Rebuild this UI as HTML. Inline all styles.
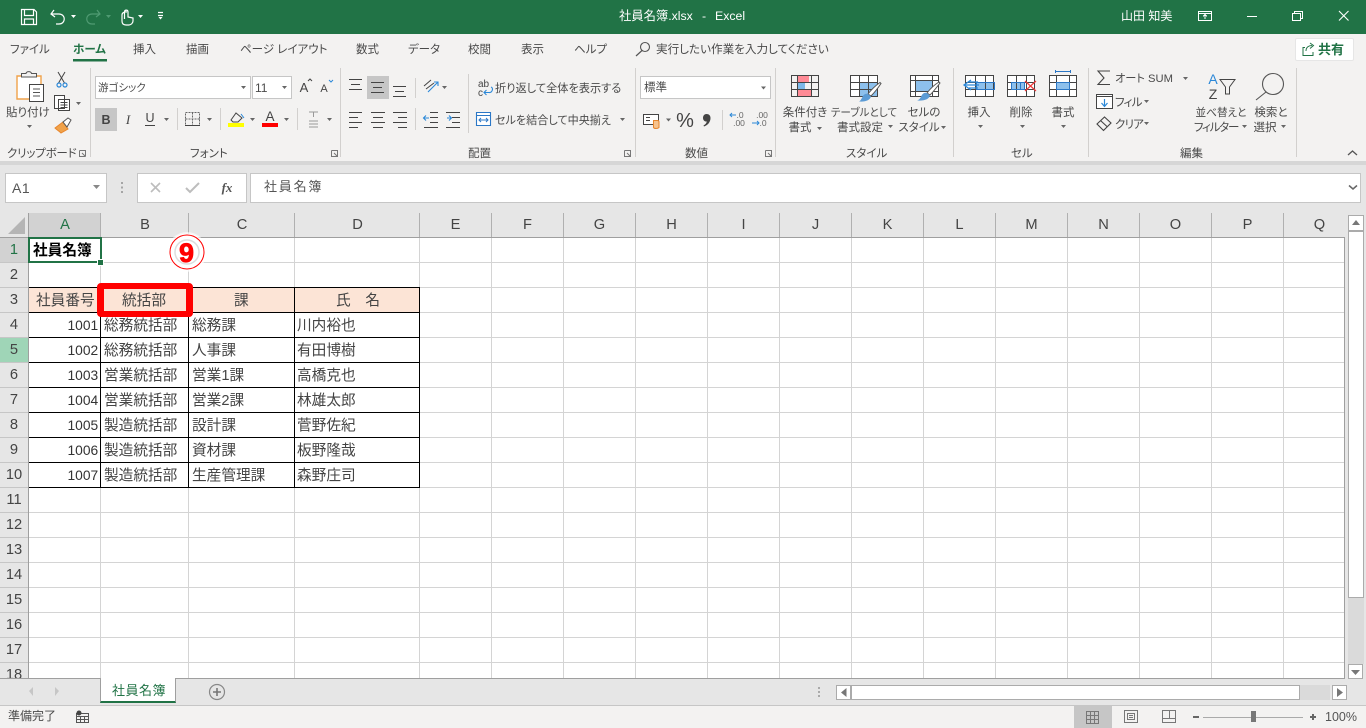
<!DOCTYPE html>
<html lang="ja"><head><meta charset="utf-8"><title>社員名簿.xlsx - Excel</title>
<style>
*{box-sizing:border-box}
html,body{margin:0;padding:0;width:1366px;height:728px;overflow:hidden;background:#fff}
body{position:relative;font-family:"Liberation Sans","Noto Sans CJK JP",sans-serif;color:#444}
div{position:absolute}
.t{white-space:nowrap;font-size:11.5px;line-height:16px;height:16px;color:#4a4a4a;font-feature-settings:"palt"}
.m{text-align:center;transform:translateX(-50%)}
.g{white-space:nowrap;font-size:14.67px;line-height:25px;height:25px;color:#444;font-family:"Liberation Sans","Noto Sans CJK JP",sans-serif;margin-top:2px}
.n{white-space:nowrap;font-size:13.8px;line-height:25px;height:25px;color:#333;left:67.5px;margin-top:0}
.h{white-space:nowrap;font-size:14.67px;line-height:24px;height:24px;text-align:center;color:#444}
.r{white-space:nowrap;font-size:14.67px;line-height:25px;height:25px;left:0;width:28px;text-align:center;color:#444}
.b{background:#fff;border:1px solid #c6c6c6}
svg{position:absolute;left:0;top:0}
</style></head><body>
<!-- backgrounds -->
<div style="left:0;top:0;width:1366px;height:34px;background:#217346"></div>
<div style="left:0;top:34px;width:1366px;height:127px;background:#f3f2f1"></div>
<div style="left:0;top:161px;width:1366px;height:52px;background:#e6e6e6"></div>
<div style="left:0;top:161px;width:1366px;height:4px;background:#d6d6d6"></div>
<div style="left:0;top:213px;width:1345px;height:24px;background:#e6e6e6"></div>
<div style="left:0;top:237px;width:28px;height:441px;background:#e6e6e6"></div>
<div style="left:1345px;top:213px;width:21px;height:465px;background:#e6e6e6"></div>
<div style="left:0;top:678px;width:1366px;height:28px;background:#e6e6e6"></div>
<div style="left:0;top:706px;width:1366px;height:22px;background:#f3f2f1"></div>
<div style="left:29px;top:213px;width:71px;height:24px;background:#d2d2d2"></div>
<div style="left:0;top:238px;width:28px;height:24px;background:#d2d2d2"></div>
<div style="left:0;top:338px;width:28px;height:24px;background:#9fd5b7"></div>
<div style="left:29px;top:288px;width:390px;height:24px;background:#fce4d6"></div>
<!-- boxes -->
<div class="b" style="left:95px;top:76px;width:156px;height:23px"></div>
<div class="b" style="left:252px;top:76px;width:40px;height:23px"></div>
<div class="b" style="left:640px;top:76px;width:131px;height:23px"></div>
<div class="b" style="left:5px;top:173px;width:102px;height:30px"></div>
<div class="b" style="left:137px;top:173px;width:110px;height:30px"></div>
<div class="b" style="left:250px;top:173px;width:1111px;height:30px"></div>
<div style="left:1295px;top:38px;width:59px;height:23px;background:#fff;border:1px solid #e6e6e6;border-radius:2px"></div>
<div style="left:367px;top:76px;width:22px;height:23px;background:#c6c6c6"></div>
<div style="left:95px;top:108px;width:22px;height:23px;background:#c6c6c6"></div>
<div style="left:1074px;top:706px;width:38px;height:22px;background:#c6c6c6"></div>
<!-- scrollbars -->
<div style="left:1348px;top:231px;width:16px;height:367px;background:#fff;border:1px solid #ababab"></div>
<div style="left:1348px;top:598px;width:16px;height:66px;background:#dadada"></div>
<div style="left:1348px;top:215px;width:16px;height:16px;background:#fff;border:1px solid #ababab"></div>
<div style="left:1348px;top:664px;width:15px;height:15px;background:#fff;border:1px solid #ababab"></div>
<div style="left:851px;top:685px;width:449px;height:15px;background:#fff;border:1px solid #ababab"></div>
<div style="left:1300px;top:685px;width:30px;height:15px;background:#dadada"></div>
<div style="left:836px;top:685px;width:15px;height:15px;background:#fff;border:1px solid #ababab"></div>
<div style="left:1332px;top:685px;width:15px;height:15px;background:#fff;border:1px solid #ababab"></div>
<!-- sheet tab -->
<div style="left:100px;top:678px;width:76px;height:25px;background:#fff;border-left:1px solid #9f9f9f;border-right:1px solid #9f9f9f;border-bottom:2px solid #217346"></div>

<svg width="1366" height="728" viewBox="0 0 1366 728" fill="none">
<g shape-rendering="crispEdges">
<!-- light grid -->
<path stroke="#d4d4d4" d="M100.5 237V678M188.5 237V678M294.5 237V678M419.5 237V678M491.5 237V678M563.5 237V678M635.5 237V678M707.5 237V678M779.5 237V678M851.5 237V678M923.5 237V678M995.5 237V678M1067.5 237V678M1139.5 237V678M1211.5 237V678M1283.5 237V678M29 262.5H1345M29 287.5H1345M29 312.5H1345M29 337.5H1345M29 362.5H1345M29 387.5H1345M29 412.5H1345M29 437.5H1345M29 462.5H1345M29 487.5H1345M29 512.5H1345M29 537.5H1345M29 562.5H1345M29 587.5H1345M29 612.5H1345M29 637.5H1345M29 662.5H1345"/>
<!-- header separators -->
<path stroke="#b0b0b0" d="M100.5 213V237M188.5 213V237M294.5 213V237M419.5 213V237M491.5 213V237M563.5 213V237M635.5 213V237M707.5 213V237M779.5 213V237M851.5 213V237M923.5 213V237M995.5 213V237M1067.5 213V237M1139.5 213V237M1211.5 213V237M1283.5 213V237"/>
<path stroke="#c6c6c6" d="M0 262.5H28M0 287.5H28M0 312.5H28M0 337.5H28M0 362.5H28M0 387.5H28M0 412.5H28M0 437.5H28M0 462.5H28M0 487.5H28M0 512.5H28M0 537.5H28M0 562.5H28M0 587.5H28M0 612.5H28M0 637.5H28M0 662.5H28"/>
<path stroke="#9f9f9f" d="M28.5 213V678M0 237.5H1345M1344.5 237V678M0 678.5H100M176 678.5H1345"/>
<path stroke="#c6c6c6" d="M0 705.5H1366"/>
<!-- black table -->
<path stroke="#000" d="M29 287.5H420M29 312.5H420M29 337.5H420M29 362.5H420M29 387.5H420M29 412.5H420M29 437.5H420M29 462.5H420M29 487.5H420M100.5 287V488M188.5 287V488M294.5 287V488M419.5 287V488"/>
<!-- ribbon separators -->
<path stroke="#d2d0ce" d="M90.5 68V157M340.5 68V157M635.5 68V157M775.5 68V157M953.5 68V157M1088.5 68V157M1296.5 68V157M468.5 74V133M177.5 108V130M220.5 108V130M297.5 108V130M415.5 78V98M415.5 108V130M722.5 110V130"/>
<!-- selected cell -->
<path stroke="#217346" stroke-width="2" d="M29 238H101V262H29Z"/>
<path fill="#217346" stroke="#fff" d="M97.5 259.5H103.5V265.5H97.5Z"/>
</g>
<!-- corner triangle -->
<path fill="#b5b5b5" d="M25 217V234H8Z"/>
<!-- QAT -->
<g stroke="#fff" stroke-width="1.2">
<path d="M21.5 9.5H34L36.5 12V24.5H21.5ZM24.5 9.5V15.5H33.5V9.5M24.5 24.5V19H33.5V24.5"/>
<path d="M54 10L51 14L55 17M51.5 14H59C66 14 66 24 59 24H56"/>
<path d="M127 12C124 11.500 122 13 122 15V21C122 24 124 25 126 25H129C131 25 133 23 133 21V18L128 17V12C128 9.500 124.500 9.500 124.500 12V19M119 19"/>
<path stroke="#4f9a72" d="M97 10L100 14L96 17M99.500 14H92C85 14 85 24 92 24H95"/>
<path d="M158 12.500H163M158 15.500H163"/>
</g>
<path fill="#fff" d="M71 15H76L73.500 18ZM138 15H143L140.500 18ZM158.500 17H162.500L160.500 19.500Z"/>
<path fill="#4f9a72" d="M106 15H111L108.500 18Z"/>
<!-- window -->
<g stroke="#fff" stroke-width="1.1" shape-rendering="crispEdges">
<path d="M1198.500 11.500H1211.500V20.500H1198.500ZM1198.500 13.500H1211.500M1205 19V15M1203 16.500L1205 14.500L1207 16.500"/>
<path d="M1247 16.500H1257M1292.500 13.500H1300.500V20.500H1292.500ZM1294.500 13.500V11.500H1302.500V18.500H1300.500"/>
</g>
<path stroke="#fff" stroke-width="1.1" d="M1339 11L1348.500 20.500M1348.500 11L1339 20.500"/>
<!-- tab underline & search -->
<path fill="#217346" d="M73 59H107V61.500H73Z"/>
<circle cx="645" cy="47" r="4.500" stroke="#555" stroke-width="1.100"/>
<path stroke="#555" stroke-width="1.200" d="M642 50.500L636 56"/>
<!-- share -->
<path stroke="#217346" stroke-width="1" d="M1305 47.500H1303V55.500H1313V52M1306 51C1306 47 1309 45.500 1312 45.500M1310 43L1313.500 45.500L1310 48.500"/>
<!-- paste -->
<path fill="#fff" stroke="#f0a24a" stroke-width="1.400" d="M17 76H41V99H17Z"/>
<path fill="#f3f2f1" stroke="#555" d="M21.500 77V73.500H26C26.500 71 31 71 31.500 73.500H36.500V77Z"/>
<path fill="#fff" stroke="#444" d="M29.500 84.500H43.500V101.500H29.500Z"/>
<path stroke="#555" d="M33 89H40M33 92.500H40M33 96H40"/>
<!-- cut copy brush -->
<path stroke="#444" d="M58 72L64.500 83M65 72L58.500 83"/>
<circle cx="59" cy="85" r="2" stroke="#2b88d8" stroke-width="1.200"/><circle cx="65" cy="85" r="2" stroke="#2b88d8" stroke-width="1.200"/>
<path fill="#fff" stroke="#444" d="M54.500 95.500H64.500V108.500H54.500ZM58.500 99.500H69.500V110.500H58.500Z"/>
<path stroke="#444" d="M60.500 102.500H67.500M60.500 105H67.500M60.500 107.500H67.500"/>
<path fill="#f0a24a" stroke="#e8862c" d="M55 128L63 122L68 129L61 133C59 131 57 130 55 128Z"/>
<path fill="#fff" stroke="#555" d="M63 122L68 118L71 120L67 127Z"/>
<!-- small dropdown arrows -->
<g fill="#666">
<path d="M76 102H81L78.500 105ZM27 125H32L29.500 128ZM241 86H246L243.500 89ZM282 86H287L284.500 89ZM164 118H169L166.500 121ZM207 118H212L209.500 121ZM250 118H255L252.500 121ZM284 118H289L286.500 121ZM327 118H332L329.500 121ZM442 86H447L444.500 89ZM620 118H625L622.500 121ZM761 86.500H766L763.500 89.500ZM666 118.500H671L668.500 121.500ZM817 127H822L819.500 130ZM888 125H893L890.500 128ZM941 126H946L943.500 129ZM978 125H983L980.500 128ZM1020 125H1025L1022.500 128ZM1061 125H1066L1063.500 128ZM1183 77H1188L1185.500 80ZM1144 100H1149L1146.500 103ZM1144 122H1149L1146.500 125ZM1242 125H1247L1244.500 128ZM1281 125H1286L1283.500 128Z"/>
<path fill="#888" d="M93 185H100L96.500 189Z"/>
</g>
<!-- font group -->
<text x="106" y="124" font-family="Liberation Sans" font-weight="700" font-size="12.500" fill="#444" text-anchor="middle">B</text>
<text x="128" y="124" font-family="Liberation Serif" font-style="italic" font-size="13" fill="#444" text-anchor="middle">I</text>
<text x="150" y="122" font-family="Liberation Sans" font-size="12.500" fill="#444" text-anchor="middle">U</text>
<path stroke="#444" d="M145 125.500H155"/>
<path stroke="#666" stroke-dasharray="2 1" d="M185.500 112.500H199.500V125.500H185.500ZM192.500 112.500V125.500M185.500 119H199.500"/>
<path stroke="#444" d="M185 125.500H200"/>
<text x="304" y="92" font-family="Liberation Sans" font-size="13" fill="#444" text-anchor="middle">A</text>
<path stroke="#444" d="M308 81L310 79L312 81"/>
<text x="324" y="92" font-family="Liberation Sans" font-size="11" fill="#444" text-anchor="middle">A</text>
<path stroke="#2b88d8" d="M329 80L331 82L333 80"/>
<path stroke="#444" d="M231 120L236 113L242 118L238 122H233Z"/>
<path stroke="#2b88d8" d="M241 114L244 118"/>
<path fill="#ffff00" d="M228 123H244V127H228Z"/>
<path fill="#f00" d="M262 123H278V127H262Z"/>
<text x="270" y="121" font-family="Liberation Sans" font-size="13.500" fill="#444" text-anchor="middle">A</text>
<path stroke="#999" d="M309 112H318M313.500 112V117M309 121H318M309 124H318M309 127H318"/>
<!-- alignment -->
<g stroke="#444" shape-rendering="crispEdges">
<path d="M349 79.500H362M351 84.500H360M349 89.500H362"/>
<path d="M371 82.500H384M373 87.500H382M371 92.500H384"/>
<path d="M393 86.500H406M395 91.500H404M393 96.500H406"/>
<path d="M349 112.500H362M349 117.500H358M349 122.500H362M349 127.500H358"/>
<path d="M371 112.500H385M373 117.500H383M371 122.500H385M373 127.500H383"/>
<path d="M393 112.500H407M398 117.500H407M393 122.500H407M398 127.500H407"/>
<path d="M430 112.500H438M430 117.500H438M430 122.500H438M424 127.500H438"/>
<path d="M446 112.500H460M452 117.500H460M452 122.500H460M446 127.500H460"/>
</g>
<path stroke="#2b88d8" stroke-width="1.100" d="M429 118H424M426 115.500L423.500 118L426 120.500M447 118H451M449 115.500L451.500 118L449 120.500"/>
<path stroke="#2b88d8" stroke-width="1.100" d="M428 92L438 82M434 82H438V86"/>
<path stroke="#444" d="M424 86L431 80M426 89L434 83"/>
<!-- wrap & merge -->
<text x="478" y="87" font-family="Liberation Sans" font-size="10" fill="#444">ab</text>
<text x="478" y="96" font-family="Liberation Sans" font-size="10" fill="#444">c</text>
<path stroke="#2b88d8" stroke-width="1.100" d="M491 87C494 88 492 93 489 92.500H484M486.500 90L484 92.500L486.500 95"/>
<path fill="#fff" stroke="#2b77c6" stroke-width="1.100" d="M476.500 112.500H490.500V125.500H476.500Z"/>
<path stroke="#2b77c6" d="M476.500 115.500H490.500"/>
<path stroke="#2b77c6" d="M479 120H488M481 118L479 120L481 122M486 118L488 120L486 122"/>
<!-- number -->
<path fill="#fff" stroke="#444" d="M643.500 114.500H658.500V124.500H643.500Z"/>
<path stroke="#444" d="M646 117.500H650M646 120.500H650"/>
<path fill="#f6c38e" stroke="#e8862c" d="M653.500 120.500H657.500C659 120.500 659 122 659 122V127.500C659 127.500 658 128.500 656 128.500C654 128.500 653.500 127.500 653.500 127.500Z"/>
<text x="685" y="127" font-family="Liberation Sans" font-size="20" fill="#444" text-anchor="middle">%</text>
<path fill="#444" d="M706.500 114C709 114 710.500 115.500 710.500 118C710.500 122 708 125 704 126.500L703.500 125.500C705.500 124.500 706.500 123 706.800 121.500C704.500 121.800 703 120 703 118C703 115.500 704.500 114 706.500 114Z"/>
<text x="740" y="118" font-family="Liberation Sans" font-size="8.500" fill="#666" text-anchor="middle">.0</text>
<text x="739" y="126" font-family="Liberation Sans" font-size="8.500" fill="#666" text-anchor="middle">.00</text>
<text x="762" y="118" font-family="Liberation Sans" font-size="8.500" fill="#666" text-anchor="middle">.00</text>
<text x="763" y="126" font-family="Liberation Sans" font-size="8.500" fill="#666" text-anchor="middle">.0</text>
<path stroke="#2b88d8" d="M730 115H736M732 113L730 115L732 117M752 123H759M757 121L759 123L757 125"/>
<!-- cond format -->
<g shape-rendering="crispEdges">
<path fill="#ff8b96" d="M797 75H809V82H797ZM797 89H811V97H797Z"/>
<path fill="#7db8e8" d="M797 82H805V89H797Z"/>
<path stroke="#444" d="M791.500 75.500H818.500V96.500H791.500ZM791.500 82.500H818.500M791.500 89.500H818.500M811.500 75.500V96.500"/>
<path stroke="#444" d="M797.500 75.500V96.500"/>
<path fill="#fff" d="M851 75H877V96H851Z"/>
<path fill="#8dc0ec" d="M860 82H877V96H860Z"/>
<path stroke="#444" d="M850.500 75.500H877.500V96.500H850.500ZM850.500 82.500H877.500M850.500 89.500H877.500M859.500 75.500V96.500M868.500 75.500V96.500"/>
<path fill="#fff" d="M911 75H938V96H911Z"/>
<path fill="#8dc0ec" d="M915 80H932V92H915Z"/>
<path stroke="#444" d="M910.500 75.500H938.500V96.500H910.500ZM910.500 80.500H938.500M910.500 91.500H938.500M915.500 75.500V96.500M932.500 75.500V96.500"/>
<!-- cells -->
<path fill="#fff" d="M965 75H993V96H965Z"/>
<path fill="#8dc0ec" d="M976 83H994V90H976Z"/>
<path stroke="#444" d="M965.500 75.500H993.500V96.500H965.500ZM965.500 82.500H993.500M965.500 89.500H993.500M975.500 75.500V96.500M985.500 75.500V96.500"/>
<path stroke="#2b77c6" d="M976.500 82.500H994.500V89.500H976.500Z"/>
<path fill="#fff" d="M1007 75H1035V96H1007Z"/>
<path fill="#8dc0ec" d="M1011 83H1024V90H1011Z"/>
<path stroke="#444" d="M1007.500 75.500H1034.500V96.500H1007.500ZM1007.500 82.500H1034.500M1007.500 89.500H1034.500M1016.500 75.500V96.500M1026.500 75.500V96.500"/>
<path stroke="#2b77c6" d="M1011.500 82.500H1024.500V89.500H1011.500ZM1020.500 82.500V89.500"/>
<path fill="#fff" d="M1049 75H1077V96H1049Z"/>
<path fill="#8dc0ec" d="M1056 82H1070V89H1056Z"/>
<path stroke="#444" d="M1049.500 75.500H1076.500V96.500H1049.500ZM1049.500 82.500H1076.500M1049.500 89.500H1076.500M1056.500 75.500V96.500M1069.500 75.500V96.500"/>
<path stroke="#2b77c6" d="M1056.500 82.500H1069.500V89.500H1056.500ZM1055 71.500H1071M1055.500 70V73M1070.500 70V73"/>
</g>
<path fill="#fff" stroke="#555" d="M868 94C871 90 875 86 880 82.500L881 83.500C878 88 875 92 871 96Z"/>
<path fill="#5b9bd5" d="M862 98C863 95 865 93 868 94L871 96.500C870 100 866 102 859 101.500C861 100.500 861 99 862 98Z"/>
<path fill="#fff" stroke="#555" d="M927 93C930 89 934 85 939 82L940 83C937 87 934 91 930 95Z"/>
<path fill="#5b9bd5" d="M921 97C922 94 924 92 927 93L930 95.500C929 99 925 101 917 100.500C920 99.500 920 98 921 97Z"/>
<path stroke="#2b88d8" stroke-width="1.300" d="M979 85H965M971 80L964 85L971 90M978 82H969M978 88H969"/>
<path stroke="#f03a3a" stroke-width="1.200" d="M1025 81L1036 91M1036 81L1025 91"/>
<!-- editing -->
<path stroke="#444" stroke-width="1.100" d="M1110 71H1098L1104 78L1098 84.500H1110"/>
<path fill="#fff" stroke="#444" d="M1096.500 94.500H1112.500V108.500H1096.500Z"/>
<path stroke="#444" d="M1096 96.500H1113"/>
<path stroke="#2b88d8" stroke-width="1.200" d="M1104.500 99V106M1101.500 103L1104.500 106.500L1107.500 103"/>
<path stroke="#444" stroke-width="1.100" d="M1097 124L1104.500 117L1111 123L1103.500 130.500ZM1100.500 120.500L1107.500 127"/>
<text x="1213" y="84" font-family="Liberation Sans" font-size="14" fill="#2b88d8" text-anchor="middle">A</text>
<text x="1213" y="99" font-family="Liberation Sans" font-size="14" fill="#444" text-anchor="middle">Z</text>
<path stroke="#444" d="M1220 79.500H1235L1229.500 87V94H1225.500V87Z"/>
<circle cx="1273" cy="84" r="10.500" stroke="#555" stroke-width="1.100"/>
<path stroke="#555" stroke-width="1.100" d="M1266 92L1256 100"/>
<path stroke="#555" stroke-width="1.300" d="M1348 155L1352.500 151L1357 155"/>
<!-- launchers -->
<path stroke="#777" d="M79.500 150.500H85.500V156.500M79.500 150.500V156.500H85.500M82 153L85 156M331.500 150.500H337.500V156.500H331.500V150.500M334 153L337 156M624.500 150.500H630.500V156.500H624.500V150.500M627 153L630 156M765.500 150.500H771.500V156.500H765.500V150.500M768 153L771 156"/>
<!-- formula bar -->
<path stroke="#bdbdbd" stroke-width="1.600" d="M151 183L160 192M160 183L151 192"/>
<path stroke="#bdbdbd" stroke-width="2" d="M186 188L190 192L199 183"/>
<text x="227" y="192" font-family="Liberation Serif" font-style="italic" font-weight="700" font-size="13" fill="#555" text-anchor="middle">fx</text>
<path fill="#a5a5a5" d="M121 182H123V184H121ZM121 186.500H123V188.500H121ZM121 191H123V193H121Z"/>
<path stroke="#666" stroke-width="1.500" d="M1349 185.500L1353 189L1357 185.500"/>
<!-- scrollbar arrows -->
<path fill="#777" d="M1352 225L1356 220L1360 225ZM1351 670H1360L1355.500 675ZM841 692.500L846.500 688V697ZM1337 688L1343 692.500L1337 697Z"/>
<path fill="#c6c6c6" d="M29 691L33 687V696ZM55 687L59 691L55 696Z"/>
<path fill="#aaa" d="M818 687H820V689H818ZM818 691H820V693H818ZM818 695H820V697H818Z"/>
<circle cx="217" cy="692" r="7.500" stroke="#888" stroke-width="1.200"/>
<path stroke="#777" stroke-width="1.600" d="M213 692H221M217 688V696"/>
<!-- status -->
<g shape-rendering="crispEdges">
<path stroke="#555" d="M76.500 713.500H88.500V722.500H76.500ZM76.500 716.500H88.500M80.500 716.500V722.500M84.500 716.500V722.500M76.500 719.500H88.500"/>
<path stroke="#777" d="M1086.500 711.500H1098.500V723.500H1086.500ZM1090.500 711.500V723.500M1094.500 711.500V723.500M1086.500 715.500H1098.500M1086.500 719.500H1098.500"/>
<path stroke="#777" d="M1124.500 710.500H1137.500V722.500H1124.500ZM1127.500 713.500H1134.500V719.500H1127.500ZM1129 715.500H1133M1129 717.500H1133"/>
<path stroke="#777" d="M1162.500 710.500H1175.500V722.500H1162.500ZM1162.500 718.500H1175.500M1169.500 710.500V718.500"/>
<path stroke="#666" stroke-width="2" d="M1193 717H1199M1310 717H1316M1313 714V720"/>
<path stroke="#aaa" d="M1203 717.500H1303"/>
<path fill="#777" d="M1251 711H1256V722H1251Z"/>
</g>
<circle cx="79" cy="713" r="2.500" fill="#444"/>
<!-- circled 9 -->
<circle cx="187" cy="252" r="20" fill="#fff" fill-opacity=".6"/>
<circle cx="187" cy="252" r="18.500" fill="#fff"/>
<circle cx="187" cy="252" r="17" stroke="#f00" stroke-width="1"/>
<circle cx="187" cy="252" r="12" stroke="#ddd" stroke-width="1.500"/>
<text x="186.500" y="262" font-family="Liberation Sans" font-weight="700" font-size="27" fill="#f00" stroke="#f00" stroke-width=".8" text-anchor="middle">9</text>
</svg>

<!-- red highlight -->
<div style="left:97px;top:283px;width:96px;height:34px;border:7px solid #f00;border-top-width:6px;border-bottom-width:6px;border-radius:4px"></div>

<!-- title -->
<div class="t" style="left:619px;top:8px;font-size:12.3px;color:#fff">社員名簿.xlsx</div>
<div class="t" style="left:702px;top:8px;font-size:12.3px;color:#fff">-</div>
<div class="t" style="left:715px;top:8px;font-size:12.3px;color:#fff">Excel</div>
<div class="t" style="left:1121px;top:8px;font-size:12px;color:#fff">山田 知美</div>
<!-- tabs -->
<div class="t" style="left:10px;top:42px">ファイル</div>
<div class="t" style="left:73px;top:42px;font-weight:700;color:#217346">ホーム</div>
<div class="t" style="left:133px;top:42px">挿入</div>
<div class="t" style="left:186px;top:42px">描画</div>
<div class="t" style="left:240px;top:42px">ページ レイアウト</div>
<div class="t" style="left:356px;top:42px">数式</div>
<div class="t" style="left:408px;top:42px">データ</div>
<div class="t" style="left:468px;top:42px">校閲</div>
<div class="t" style="left:521px;top:42px">表示</div>
<div class="t" style="left:574px;top:42px">ヘルプ</div>
<div class="t" style="left:656px;top:42px;font-size:11.6px">実行したい作業を入力してください</div>
<div class="t" style="left:1318px;top:42px;font-size:13px;font-weight:700;color:#217346">共有</div>
<!-- ribbon text -->
<div class="t" style="left:6px;top:105px">貼り付け</div>
<div class="t" style="left:98px;top:80px;font-size:10.5px">游ゴシック</div>
<div class="t" style="left:255px;top:80px;font-size:12px">11</div>
<div class="t" style="left:644px;top:80px">標準</div>
<div class="t" style="left:495px;top:81px;font-size:11.2px">折り返して全体を表示する</div>
<div class="t" style="left:495px;top:113px;font-size:11.1px">セルを結合して中央揃え</div>
<div class="t m" style="left:805px;top:105px">条件付き</div>
<div class="t m" style="left:800px;top:120px">書式</div>
<div class="t m" style="left:864px;top:105px;font-size:10.6px">テーブルとして</div>
<div class="t m" style="left:860px;top:120px">書式設定</div>
<div class="t m" style="left:924px;top:105px">セルの</div>
<div class="t m" style="left:919px;top:120px">スタイル</div>
<div class="t m" style="left:979px;top:105px">挿入</div>
<div class="t m" style="left:1021px;top:105px">削除</div>
<div class="t m" style="left:1063px;top:105px">書式</div>
<div class="t" style="left:1115px;top:71px;font-size:11.2px">オート SUM</div>
<div class="t" style="left:1115px;top:95px;letter-spacing:-.8px">フィル</div>
<div class="t" style="left:1115px;top:117px;letter-spacing:-.8px">クリア</div>
<div class="t m" style="left:1221px;top:105px;font-size:10.6px">並べ替えと</div>
<div class="t m" style="left:1216px;top:120px;letter-spacing:-1.2px">フィルター</div>
<div class="t m" style="left:1271px;top:105px">検索と</div>
<div class="t m" style="left:1265px;top:120px">選択</div>
<div class="t" style="left:7px;top:146px;letter-spacing:-.2px">クリップボード</div>
<div class="t" style="left:190px;top:146px">フォント</div>
<div class="t" style="left:468px;top:146px">配置</div>
<div class="t" style="left:685px;top:146px">数値</div>
<div class="t" style="left:846px;top:146px">スタイル</div>
<div class="t" style="left:1011px;top:146px">セル</div>
<div class="t" style="left:1180px;top:146px">編集</div>
<!-- formula -->
<div class="t" style="left:12px;top:180px;font-size:14px;color:#555;letter-spacing:.5px">A1</div>
<div class="t" style="left:264px;top:179px;font-size:13px;letter-spacing:1.8px;color:#555;font-feature-settings:normal">社員名簿</div>
<!-- column headers -->
<div class="h" style="left:29.5px;top:213px;width:71px;color:#217346">A</div>
<div class="h" style="left:101.5px;top:213px;width:87px">B</div>
<div class="h" style="left:189.5px;top:213px;width:105px">C</div>
<div class="h" style="left:295.5px;top:213px;width:124px">D</div>
<div class="h" style="left:420px;top:213px;width:71px">E</div>
<div class="h" style="left:492px;top:213px;width:71px">F</div>
<div class="h" style="left:564px;top:213px;width:71px">G</div>
<div class="h" style="left:636px;top:213px;width:71px">H</div>
<div class="h" style="left:708px;top:213px;width:71px">I</div>
<div class="h" style="left:780px;top:213px;width:71px">J</div>
<div class="h" style="left:852px;top:213px;width:71px">K</div>
<div class="h" style="left:924px;top:213px;width:71px">L</div>
<div class="h" style="left:996px;top:213px;width:71px">M</div>
<div class="h" style="left:1068px;top:213px;width:71px">N</div>
<div class="h" style="left:1140px;top:213px;width:71px">O</div>
<div class="h" style="left:1212px;top:213px;width:71px">P</div>
<div class="h" style="left:1284px;top:213px;width:71px;">Q</div>
<!-- row headers -->
<div class="r" style="top:238px;color:#217346">1</div>
<div class="r" style="top:263px">2</div>
<div class="r" style="top:288px">3</div>
<div class="r" style="top:313px">4</div>
<div class="r" style="top:338px">5</div>
<div class="r" style="top:363px">6</div>
<div class="r" style="top:388px">7</div>
<div class="r" style="top:413px">8</div>
<div class="r" style="top:438px">9</div>
<div class="r" style="top:463px">10</div>
<div class="r" style="top:488px">11</div>
<div class="r" style="top:513px">12</div>
<div class="r" style="top:538px">13</div>
<div class="r" style="top:563px">14</div>
<div class="r" style="top:588px">15</div>
<div class="r" style="top:613px">16</div>
<div class="r" style="top:638px">17</div>
<div class="r" style="top:663px;height:15px;overflow:hidden">18</div>
<!-- cells -->
<div class="g" style="left:33px;top:237px;font-weight:700;color:#000">社員名簿</div>
<div class="g" style="left:36px;top:287px">社員番号</div>
<div class="g" style="left:122px;top:287px">統括部</div>
<div class="g" style="left:234px;top:287px">課</div>
<div class="g" style="left:336px;top:287px">氏　名</div>
<div class="g n" style="top:313px">1001</div><div class="g" style="left:104px;top:312px">総務統括部</div><div class="g" style="left:192px;top:312px">総務課</div><div class="g" style="left:297px;top:312px">川内裕也</div>
<div class="g n" style="top:338px">1002</div><div class="g" style="left:104px;top:337px">総務統括部</div><div class="g" style="left:192px;top:337px">人事課</div><div class="g" style="left:297px;top:337px">有田博樹</div>
<div class="g n" style="top:363px">1003</div><div class="g" style="left:104px;top:362px">営業統括部</div><div class="g" style="left:192px;top:362px">営業1課</div><div class="g" style="left:297px;top:362px">高橋克也</div>
<div class="g n" style="top:388px">1004</div><div class="g" style="left:104px;top:387px">営業統括部</div><div class="g" style="left:192px;top:387px">営業2課</div><div class="g" style="left:297px;top:387px">林雄太郎</div>
<div class="g n" style="top:413px">1005</div><div class="g" style="left:104px;top:412px">製造統括部</div><div class="g" style="left:192px;top:412px">設計課</div><div class="g" style="left:297px;top:412px">菅野佐紀</div>
<div class="g n" style="top:438px">1006</div><div class="g" style="left:104px;top:437px">製造統括部</div><div class="g" style="left:192px;top:437px">資材課</div><div class="g" style="left:297px;top:437px">板野隆哉</div>
<div class="g n" style="top:463px">1007</div><div class="g" style="left:104px;top:462px">製造統括部</div><div class="g" style="left:192px;top:462px">生産管理課</div><div class="g" style="left:297px;top:462px">森野庄司</div>
<!-- bottom -->
<div class="t" style="left:112px;top:683px;font-size:13px;letter-spacing:.5px;color:#217346;font-feature-settings:normal">社員名簿</div>
<div class="t" style="left:8px;top:708px;font-size:12px;font-feature-settings:normal">準備完了</div>
<div class="t" style="left:1325px;top:709px;font-size:12.500px;color:#555">100%</div>
</body></html>
